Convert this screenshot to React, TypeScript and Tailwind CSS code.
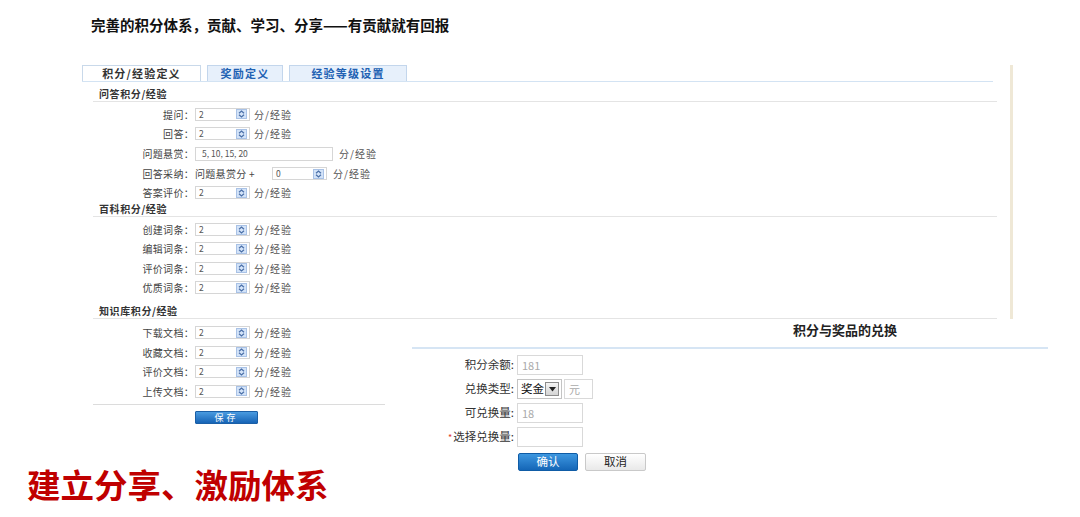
import React from "react";

const cjk = "font-['Noto_Sans_CJK_SC','Noto_Sans',sans-serif]";

function Spinner() {
  return (
    <span className="ml-auto mr-[2px] flex h-[10px] w-[11px] flex-col items-center justify-center border border-[#a9c2e6] bg-[#d3e3f8]">
      <svg width="7" height="8" viewBox="0 0 7 8" fill="none" stroke="#4a6fa8" strokeWidth="1.2">
        <path d="M1 3.2 L3.5 1 L6 3.2" />
        <path d="M1 4.8 L3.5 7 L6 4.8" />
      </svg>
    </span>
  );
}

function SpinBox({ value }: { value: string }) {
  return (
    <div className="flex h-[13px] w-[55px] items-center border border-[#d6d6d6] bg-white pl-[3px] text-[8.5px] leading-none text-[#555]">
      {value}
      <Spinner />
    </div>
  );
}

function Unit({ ml = "ml-[4px]" }: { ml?: string }) {
  return <span className={`text-[10px] tracking-[1px] text-[#555] ${ml}`}>分/经验</span>;
}

function Row({ label, h }: { label: string; h: string }) {
  return (
    <div className={`flex items-center ${h}`}>
      <span className="w-[101px] text-right text-[10px] tracking-[0.3px] text-[#444]">{label}</span>
      <div className="ml-[1px]">
        <SpinBox value="2" />
      </div>
      <Unit />
    </div>
  );
}

function SectionHead({ title, h }: { title: string; h: string }) {
  return (
    <div className={`flex items-end border-b border-[#e4e4e4] pb-[1px] pl-[6px] ${h}`}>
      <span className="text-[10px] leading-[12px] font-bold tracking-[0.6px] text-[#333]">{title}</span>
    </div>
  );
}

function DlgInput({ value, w = "w-[66px]" }: { value?: string; w?: string }) {
  return (
    <div className={`flex h-[20px] items-center border border-[#d9d9d9] bg-white pl-[4px] text-[11px] text-[#aaa] ${w}`}>
      {value}
    </div>
  );
}

function DlgRow({ label, children, star }: { label: string; children: React.ReactNode; star?: boolean }) {
  return (
    <div className="flex h-[20px] items-center">
      <span className="w-[102px] text-right text-[11.5px] text-[#333]">
        {star && <span className="mr-[1px] text-[9px] text-[#e0392b]">*</span>}
        {label}
      </span>
      <div className="ml-[3px] flex items-center gap-[2px]">{children}</div>
    </div>
  );
}

export default function App() {
  return (
    <div className={`h-[517px] w-[1080px] overflow-hidden bg-white ${cjk}`}>
      <h1 className="pl-[91px] pt-[15px] text-[14.5px] leading-[20px] font-bold text-[#111]">
        完善的积分体系，贡献、学习、分享——有贡献就有回报
      </h1>

      <div className="mt-[30px] flex">
        <div className="ml-[82px] w-[915px]">
          <div className="flex h-[17px] w-[911px] gap-[6px] border-b border-[#d3e3f3]">
            <div className="flex w-[119px] items-center justify-center border border-b-0 border-[#c9d9ea] bg-white text-[11px] font-bold tracking-[1.2px] text-[#333]">
              积分/经验定义
            </div>
            <div className="flex w-[76px] items-center justify-center border border-b-0 border-[#c3d6ec] bg-[#e7f0fb] text-[11px] font-bold tracking-[1.2px] text-[#2161b3]">
              奖励定义
            </div>
            <div className="flex w-[118px] items-center justify-center border border-b-0 border-[#c3d6ec] bg-[#e7f0fb] text-[11px] font-bold tracking-[1.2px] text-[#2161b3]">
              经验等级设置
            </div>
          </div>

          <div className="ml-[11px] w-[904px]">
            <SectionHead title="问答积分/经验" h="h-[20px]" />
            <div className="mt-[2px]">
              <Row label="提问：" h="h-[20px]" />
              <Row label="回答：" h="h-[19px]" />
              <div className="flex h-[21px] items-center">
                <span className="w-[101px] text-right text-[10px] tracking-[0.3px] text-[#444]">问题悬赏：</span>
                <div className="ml-[1px] flex h-[14px] w-[138px] items-center border border-[#d6d6d6] pl-[6px] text-[8.5px] text-[#555]">
                  5, 10, 15, 20
                </div>
                <Unit ml="ml-[6px]" />
              </div>
              <div className="flex h-[19px] items-center">
                <span className="w-[101px] text-right text-[10px] tracking-[0.3px] text-[#444]">回答采纳：</span>
                <span className="ml-[1px] w-[77px] text-[10px] tracking-[0.3px] text-[#444]">问题悬赏分 +</span>
                <SpinBox value="0" />
                <Unit ml="ml-[6px]" />
              </div>
              <Row label="答案评价：" h="h-[19px]" />
            </div>

            <SectionHead title="百科积分/经验" h="h-[15px]" />
            <div className="mt-[3px]">
              <Row label="创建词条：" h="h-[19px]" />
              <Row label="编辑词条：" h="h-[19px]" />
              <Row label="评价词条：" h="h-[20px]" />
              <Row label="优质词条：" h="h-[19px]" />
            </div>

            <SectionHead title="知识库积分/经验" h="h-[22px]" />
          </div>
        </div>
        <div className="ml-[13px] w-[3px] bg-[#efe8d6]" />
      </div>

      <div className="flex items-start">
        <div className="ml-[93px] w-[292px]">
          <div className="mt-[4px]">
            <Row label="下载文档：" h="h-[19px]" />
            <Row label="收藏文档：" h="h-[20px]" />
            <Row label="评价文档：" h="h-[19px]" />
            <Row label="上传文档：" h="h-[20px]" />
          </div>
          <div className="mt-[3px] border-t border-[#dcdcdc]" />
          <button className="ml-[102px] mt-[6px] flex h-[13px] w-[63px] items-center justify-center rounded-[1px] border border-[#1b5fa6] bg-gradient-to-b from-[#4a9be0] to-[#1564b6] text-[9px] leading-none tracking-[3px] text-white">
            保存
          </button>
        </div>

        <div className="ml-[27px] w-[636px]">
          <div className="flex h-[22px] items-center pl-[381px] text-[13px] font-bold text-[#222]">积分与奖品的兑换</div>
          <div className="mt-[6px] h-[2px] bg-[#d6e5f4]" />
          <div className="mt-[6px] flex flex-col gap-[4px]">
            <DlgRow label="积分余额:">
              <DlgInput value="181" />
            </DlgRow>
            <DlgRow label="兑换类型:">
              <div className="flex h-[20px] w-[45px] items-center border border-[#c4c4c4] bg-white pl-[3px] text-[11.5px] text-[#111]">
                奖金
                <span className="ml-auto mr-[2px] flex h-[14px] w-[14px] items-center justify-center border border-[#8c8c8c] bg-gradient-to-b from-[#f4f4f4] to-[#d4d4d4]">
                  <svg width="7" height="5" viewBox="0 0 7 5">
                    <path d="M0 0 H7 L3.5 4.5 Z" fill="#222" />
                  </svg>
                </span>
              </div>
              <DlgInput value="元" w="w-[29px]" />
            </DlgRow>
            <DlgRow label="可兑换量:">
              <DlgInput value="18" />
            </DlgRow>
            <DlgRow label="选择兑换量:" star>
              <DlgInput />
            </DlgRow>
          </div>
          <div className="ml-[106px] mt-[6px] flex gap-[7px]">
            <button className="flex h-[18px] w-[60px] items-center justify-center rounded-[2px] border border-[#0f5ca6] bg-gradient-to-b from-[#3d97e0] to-[#1466b7] text-[11.5px] text-white">
              确认
            </button>
            <button className="flex h-[18px] w-[61px] items-center justify-center rounded-[2px] border border-[#c9c9c9] bg-gradient-to-b from-[#ffffff] to-[#e9e9e9] text-[11.5px] text-[#222]">
              取消
            </button>
          </div>
        </div>
      </div>

      <div className="-mt-[4px] pl-[27px] text-[33.5px] leading-[33px] font-bold text-[#c00000]">建立分享、激励体系</div>
    </div>
  );
}
